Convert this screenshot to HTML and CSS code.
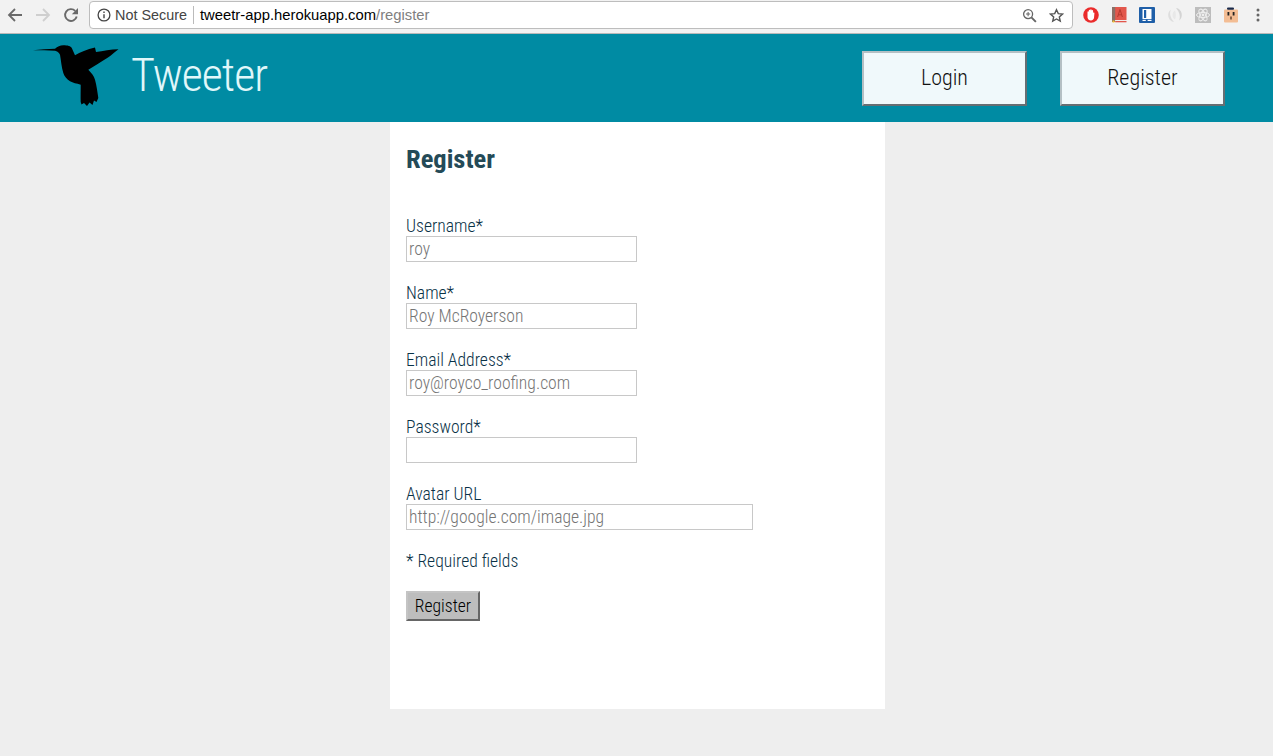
FILE: index.html
```html
<!DOCTYPE html>
<html lang="en">
<head>
    <meta charset="UTF-8">
    <meta name="viewport" content="width=device-width, initial-scale=1.0">
    <title>Tweeter</title>
    <link rel="stylesheet" href="styles.css">
</head>
<body>

    <div class="chrome">
        <div class="chrome-nav">
            <svg class="chrome-icon" viewBox="0 0 16 16"><path d="M15 8H2M8 2 2 8l6 6" fill="none" stroke="#6a6a6a" stroke-width="1.8"/></svg>
            <svg class="chrome-icon" viewBox="0 0 16 16"><path d="M1 8h13M8 2l6 6-6 6" fill="none" stroke="#cfcfcf" stroke-width="1.8"/></svg>
            <svg class="chrome-icon" viewBox="0 0 16 16"><path d="M13.700 9.500A5.900 5.900 0 1 1 12.200 3.900" fill="none" stroke="#6a6a6a" stroke-width="1.900"/><path d="M15 1v6.200H8.800z" fill="#6a6a6a"/></svg>
        </div>
        <div class="omnibox">
            <svg class="info-icon" viewBox="0 0 14 14"><circle cx="7" cy="7" r="5.900" fill="none" stroke="#444" stroke-width="1.300"/><path d="M7 6.200v4.100M7 3.600v1.400" stroke="#444" stroke-width="1.400"/></svg>
            <span class="secure">Not Secure</span>
            <span class="omni-sep"></span>
            <span class="url">tweetr-app.herokuapp.com<span class="url-path">/register</span></span>
            <svg class="zoom-icon" viewBox="0 0 16 16"><circle cx="6.500" cy="6.500" r="4.800" fill="none" stroke="#666" stroke-width="1.400"/><path d="m10 10 4.800 4.800" stroke="#666" stroke-width="2"/><path d="M4.300 6.500h4.400M6.500 4.300v4.400" stroke="#666" stroke-width="1.100"/></svg>
            <svg class="star-icon" viewBox="0 0 16 16"><path d="m8 1.800 1.900 4.200 4.500.5-3.400 3 1 4.500L8 11.700 4 14l1-4.500-3.400-3 4.500-.5z" fill="none" stroke="#555" stroke-width="1.500"/></svg>
        </div>
        <div class="extensions">
            <!-- stop sign with a hand -->
            <svg class="ext" viewBox="0 0 16 16"><circle cx="8" cy="8" r="7.800" fill="#ea2b2b"/><path d="M4.500 7V5c0-1 1.200-1 1.300 0V3.500c0-1 1.300-1 1.400 0V3c0-1 1.400-1 1.500 0v.6c.2-.9 1.400-.8 1.400.1V6c.3-.7 1.500-.6 1.300.4L11 11c-.4 1.500-1.500 2.500-3 2.500-2 0-3-1.200-3.500-3z" fill="#fff"/></svg>
            <!-- red book -->
            <svg class="ext" viewBox="0 0 16 16"><rect x="1" width="14.500" height="13" fill="#e2574c"/><rect x="1" width="3.200" height="15" fill="#8a7068"/><rect x="4.200" y="13" width="11.300" height="1" fill="#eee"/><rect x="4.200" y="14" width="11.300" height="1.300" fill="#e2574c"/><rect x="1.500" y="13.500" width="2" height="2" fill="#f2c230"/><path d="m6.600 10 2.400-7.500 2.400 7.500M7.500 7.800h3" fill="none" stroke="#b5392f" stroke-width="1"/></svg>
            <!-- blue book -->
            <svg class="ext" viewBox="0 0 16 16"><rect width="16" height="16" rx="1" fill="#1f5fa8"/><rect x="3.500" y="2" width="9" height="10" fill="#fff"/><rect x="5" y="3" width="2.200" height="8" fill="#1f5fa8"/><rect x="3.500" y="12.800" width="9" height="1.200" fill="#fff"/><rect x="6.800" y="12.300" width="1.800" height="2.200" fill="#1f5fa8"/></svg>
            <!-- grey swirl -->
            <svg class="ext" viewBox="0 0 16 16"><path d="M9 1a7 7 0 0 1 3 12.500c1.800-3.500.8-8-3-12.500z" fill="#d4d4d4"/><path d="M7 15A7 7 0 0 1 4 2.500C2.200 6 3.200 10.500 7 15z" fill="#dedede"/><path d="M8 3.500A5 5 0 0 0 5.500 8c0 2 .8 3.200 2.500 4.500 1-1.500 1.300-6 0-9z" fill="#e8e8e8"/></svg>
            <!-- atom -->
            <svg class="ext" viewBox="0 0 16 16"><rect width="16" height="16" fill="#bdbdbd"/><g fill="none" stroke="#eee" stroke-width="1"><ellipse cx="8" cy="8" rx="6.500" ry="2.600"/><ellipse cx="8" cy="8" rx="6.500" ry="2.600" transform="rotate(60 8 8)"/><ellipse cx="8" cy="8" rx="6.500" ry="2.600" transform="rotate(120 8 8)"/></g><circle cx="8" cy="8" r="1.400" fill="#eee"/></svg>
            <!-- outlet face -->
            <svg class="ext" viewBox="0 0 16 16"><rect x="1" y="2.500" width="14" height="13" rx="1" fill="#f3bd94"/><rect x="4" y="0.500" width="7" height="2.200" rx="1" fill="#1b2a4a"/><rect x="4.500" y="5" width="1.800" height="3.500" fill="#222"/><rect x="9.700" y="5" width="1.800" height="3.500" fill="#222"/><rect x="7.200" y="9.500" width="1.600" height="3" fill="#6b4a35"/></svg>
            <svg class="ext-menu" viewBox="0 0 4 16"><circle cx="2" cy="3" r="1.500" fill="#666"/><circle cx="2" cy="8" r="1.500" fill="#666"/><circle cx="2" cy="13" r="1.500" fill="#666"/></svg>
        </div>
    </div>

    <header class="site-header">
        <svg class="logo" viewBox="0 0 86 62"><path d="M0 5.300C7 4.500 15 4 22 3.700 24.500 1.500 27 .3 30.300.3 34.500.3 38 1 39 3.500L42 10.300C47 7 54 4.500 62 2.500L63 7C70 6 78 4.500 85.500 4.300 82 7 79 9.800 75 12.500 68 17 61 21.500 55.300 24.700 58.500 28 61 31 62 34.700 63.500 40 64.500 47 65.300 53L63.500 57 61 55.500 59.500 60 56.500 57.500 54 61 51 58 48.500 59.500 47.700 57C47.500 52 47.700 45 47.700 39.700 43.500 38.500 40 38 37 36.300 33.500 34 31.500 31.500 30.300 28 28.500 22 28 15 27 9.700 26 7.500 24 6 22 5.700 15 5.600 7 5.500 0 5.300Z" fill="#000"/></svg>
        <h1 class="site-title">Tweeter</h1>
        <nav class="site-nav">
            <a class="nav-btn" href="#">Login</a>
            <a class="nav-btn" href="#">Register</a>
        </nav>
    </header>

    <main class="page">
        <h2>Register</h2>
        <form class="register-form">
            <div class="field">
                <label for="username">Username*</label>
                <input type="text" id="username" placeholder="roy">
            </div>
            <div class="field">
                <label for="name">Name*</label>
                <input type="text" id="name" placeholder="Roy McRoyerson">
            </div>
            <div class="field">
                <label for="email">Email Address*</label>
                <input type="text" id="email" placeholder="roy@royco_roofing.com">
            </div>
            <div class="field">
                <label for="password">Password*</label>
                <input type="password" id="password">
            </div>
            <div class="field">
                <label for="avatar">Avatar URL</label>
                <input class="wide" type="text" id="avatar" placeholder="http://google.com/image.jpg">
            </div>
            <p class="required">* Required fields</p>
            <button type="button" class="submit-btn">Register</button>
        </form>
    </main>

</body>
</html>
```

FILE: styles.css
```css
* {
    box-sizing: border-box;
}

body {
    margin: 0;
    height: 756px;
    overflow: hidden;
    background-color: #eeeeee;
    font-family: Roboto, Arial, sans-serif;
}

/* browser toolbar */
.chrome {
    display: flex;
    align-items: center;
    height: 34px;
    padding: 1px 0 4px 7px;
    background-color: #f2f2f2;
    border-bottom: 1px solid #b9b9b9;
}

.chrome-nav {
    display: flex;
    gap: 12px;
    width: 82px;
}

.chrome-icon {
    width: 16px;
    height: 16px;
}

.omnibox {
    display: flex;
    align-items: center;
    width: 984px;
    height: 28px;
    padding: 0 7px;
    background-color: #fff;
    border: 1px solid #bdbdbd;
    border-radius: 4px;
    font-family: "Liberation Sans", Arial, sans-serif;
    font-size: 14.4px;
}

.info-icon {
    width: 14px;
    height: 14px;
    margin-right: 4px;
}

.secure {
    color: #444;
}

.omni-sep {
    width: 1px;
    height: 18px;
    margin: 0 6px;
    background-color: #bbb;
}

.url {
    flex: 1;
    color: #000;
    font-size: 14.8px;
}

.url-path {
    color: #808080;
}

.zoom-icon {
    width: 15px;
    height: 15px;
    margin-right: 12px;
}

.star-icon {
    width: 15px;
    height: 15px;
    margin-right: 1px;
}

.extensions {
    display: flex;
    align-items: center;
    gap: 12px;
    margin-left: 10px;
}

.ext {
    width: 16px;
    height: 16px;
}

.ext-menu {
    width: 4px;
    height: 16px;
    margin-left: 5px;
}

/* site header */
.site-header {
    display: flex;
    align-items: center;
    height: 88px;
    padding: 0 48px 0 33px;
    background-color: #008ba3;
}

.logo {
    width: 86px;
    height: 62px;
    margin-bottom: 4px;
    margin-right: 12px;
}

.site-title {
    margin: 0 0 6px;
    color: #e0f7fa;
    font-size: 46px;
    font-weight: 300;
    font-stretch: condensed;
    letter-spacing: -1px;
}

.site-nav {
    display: flex;
    gap: 33px;
    margin-left: auto;
}

.nav-btn {
    display: flex;
    align-items: center;
    justify-content: center;
    width: 165px;
    height: 55px;
    padding-bottom: 2px;
    background-color: #f0f9fb;
    border: 2px solid;
    border-color: #b4c0c4 #666e72 #666e72 #b4c0c4;
    color: #111;
    font-size: 22px;
    font-weight: 300;
    font-stretch: condensed;
    text-decoration: none;
}

/* form column */
.page {
    width: 495px;
    height: 587px;
    margin-left: 390px;
    padding: 20px 16px;
    background-color: #fff;
    color: #0a3247;
    font-weight: 300;
    font-stretch: condensed;
}

h2 {
    margin: 0 0 40px;
    color: #244a57;
    font-size: 26.5px;
    line-height: 34px;
    font-weight: 700;
}

.field {
    margin-bottom: 21px;
}

label {
    display: block;
    font-size: 17.6px;
    line-height: 20px;
}

input {
    display: block;
    width: 231px;
    height: 26px;
    padding: 0 2px 1px;
    border: 1px solid #c8c8c8;
    font-family: inherit;
    font-size: 17.6px;
    font-weight: 300;
    font-stretch: condensed;
}

input.wide {
    width: 347px;
}

input::placeholder {
    color: #757575;
}

.required {
    margin: 20px 0 19px;
    font-size: 17.6px;
    line-height: 21px;
}

.submit-btn {
    display: block;
    width: 74px;
    height: 30px;
    padding: 0;
    background-color: #bdbdbd;
    border: 2px solid;
    border-color: #c4c4c4 #666 #666 #c4c4c4;
    color: #000;
    font-family: inherit;
    font-size: 17.6px;
    font-weight: 300;
    font-stretch: condensed;
}
```
